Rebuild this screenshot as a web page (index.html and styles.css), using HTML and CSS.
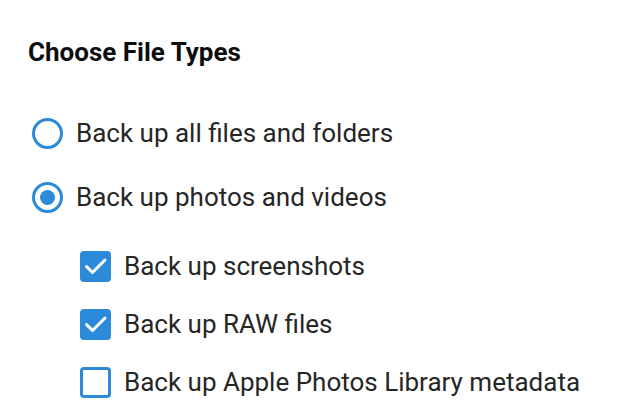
FILE: index.html
```html
<!DOCTYPE html>
<html>
<head>
<meta charset="utf-8">
<link rel="stylesheet" href="styles.css">
</head>
<body>
<div class="panel">
  <h1 class="title">Choose File Types</h1>
  <div class="options">
    <label class="option">
      <span class="radio"></span>
      <span class="label">Back up all files and folders</span>
    </label>
    <label class="option">
      <span class="radio checked"></span>
      <span class="label">Back up photos and videos</span>
    </label>
    <div class="suboptions">
      <label class="sub">
        <span class="checkbox checked">
          <svg viewBox="0 0 32 32" width="32" height="32"><path d="M6.5 16.5 L12.5 22.5 L25 10" fill="none" stroke="#fff" stroke-width="3" stroke-linecap="round" stroke-linejoin="round"/></svg>
        </span>
        <span class="label">Back up screenshots</span>
      </label>
      <label class="sub">
        <span class="checkbox checked">
          <svg viewBox="0 0 32 32" width="32" height="32"><path d="M6.5 16.5 L12.5 22.5 L25 10" fill="none" stroke="#fff" stroke-width="3" stroke-linecap="round" stroke-linejoin="round"/></svg>
        </span>
        <span class="label">Back up RAW files</span>
      </label>
      <label class="sub">
        <span class="checkbox"></span>
        <span class="label">Back up Apple Photos Library metadata</span>
      </label>
    </div>
  </div>
</div>
</body>
</html>
```
FILE: styles.css
```css
html, body {
  margin: 0;
  padding: 0;
  background: #ffffff;
}
body {
  font-family: Roboto, "Liberation Sans", sans-serif;
  color: #262626;
}
.panel {
  padding: 36px 0 0 28px;
}
.title {
  margin: 0;
  font-size: 26px;
  font-weight: 700;
  line-height: 32px;
  color: #0d0d0d;
}
.options {
  margin-top: 49px;
  display: flex;
  flex-direction: column;
}
.option {
  display: flex;
  align-items: center;
  gap: 13px;
  height: 32px;
  margin-bottom: 32px;
  padding-left: 4px;
}
.radio {
  box-sizing: border-box;
  width: 31px;
  height: 31px;
  border: 3px solid #2b8ad9;
  border-radius: 50%;
  display: flex;
  align-items: center;
  justify-content: center;
  flex: none;
}
.radio.checked::after {
  content: "";
  width: 15px;
  height: 15px;
  border-radius: 50%;
  background: #2b8ad9;
}
.label {
  font-size: 26px;
  line-height: 32px;
  color: #262626;
  white-space: nowrap;
}
.suboptions {
  margin-top: 5px;
  padding-left: 52px;
  display: flex;
  flex-direction: column;
  gap: 26px;
}
.sub {
  display: flex;
  align-items: center;
  gap: 13px;
  height: 32px;
}
.checkbox {
  box-sizing: border-box;
  width: 31px;
  height: 31px;
  border: 3px solid #2b8ad9;
  border-radius: 4px;
  display: flex;
  align-items: center;
  justify-content: center;
  flex: none;
}
.checkbox.checked {
  background: #2b8ad9;
}
.checkbox svg {
  display: block;
  flex: none;
}
```
